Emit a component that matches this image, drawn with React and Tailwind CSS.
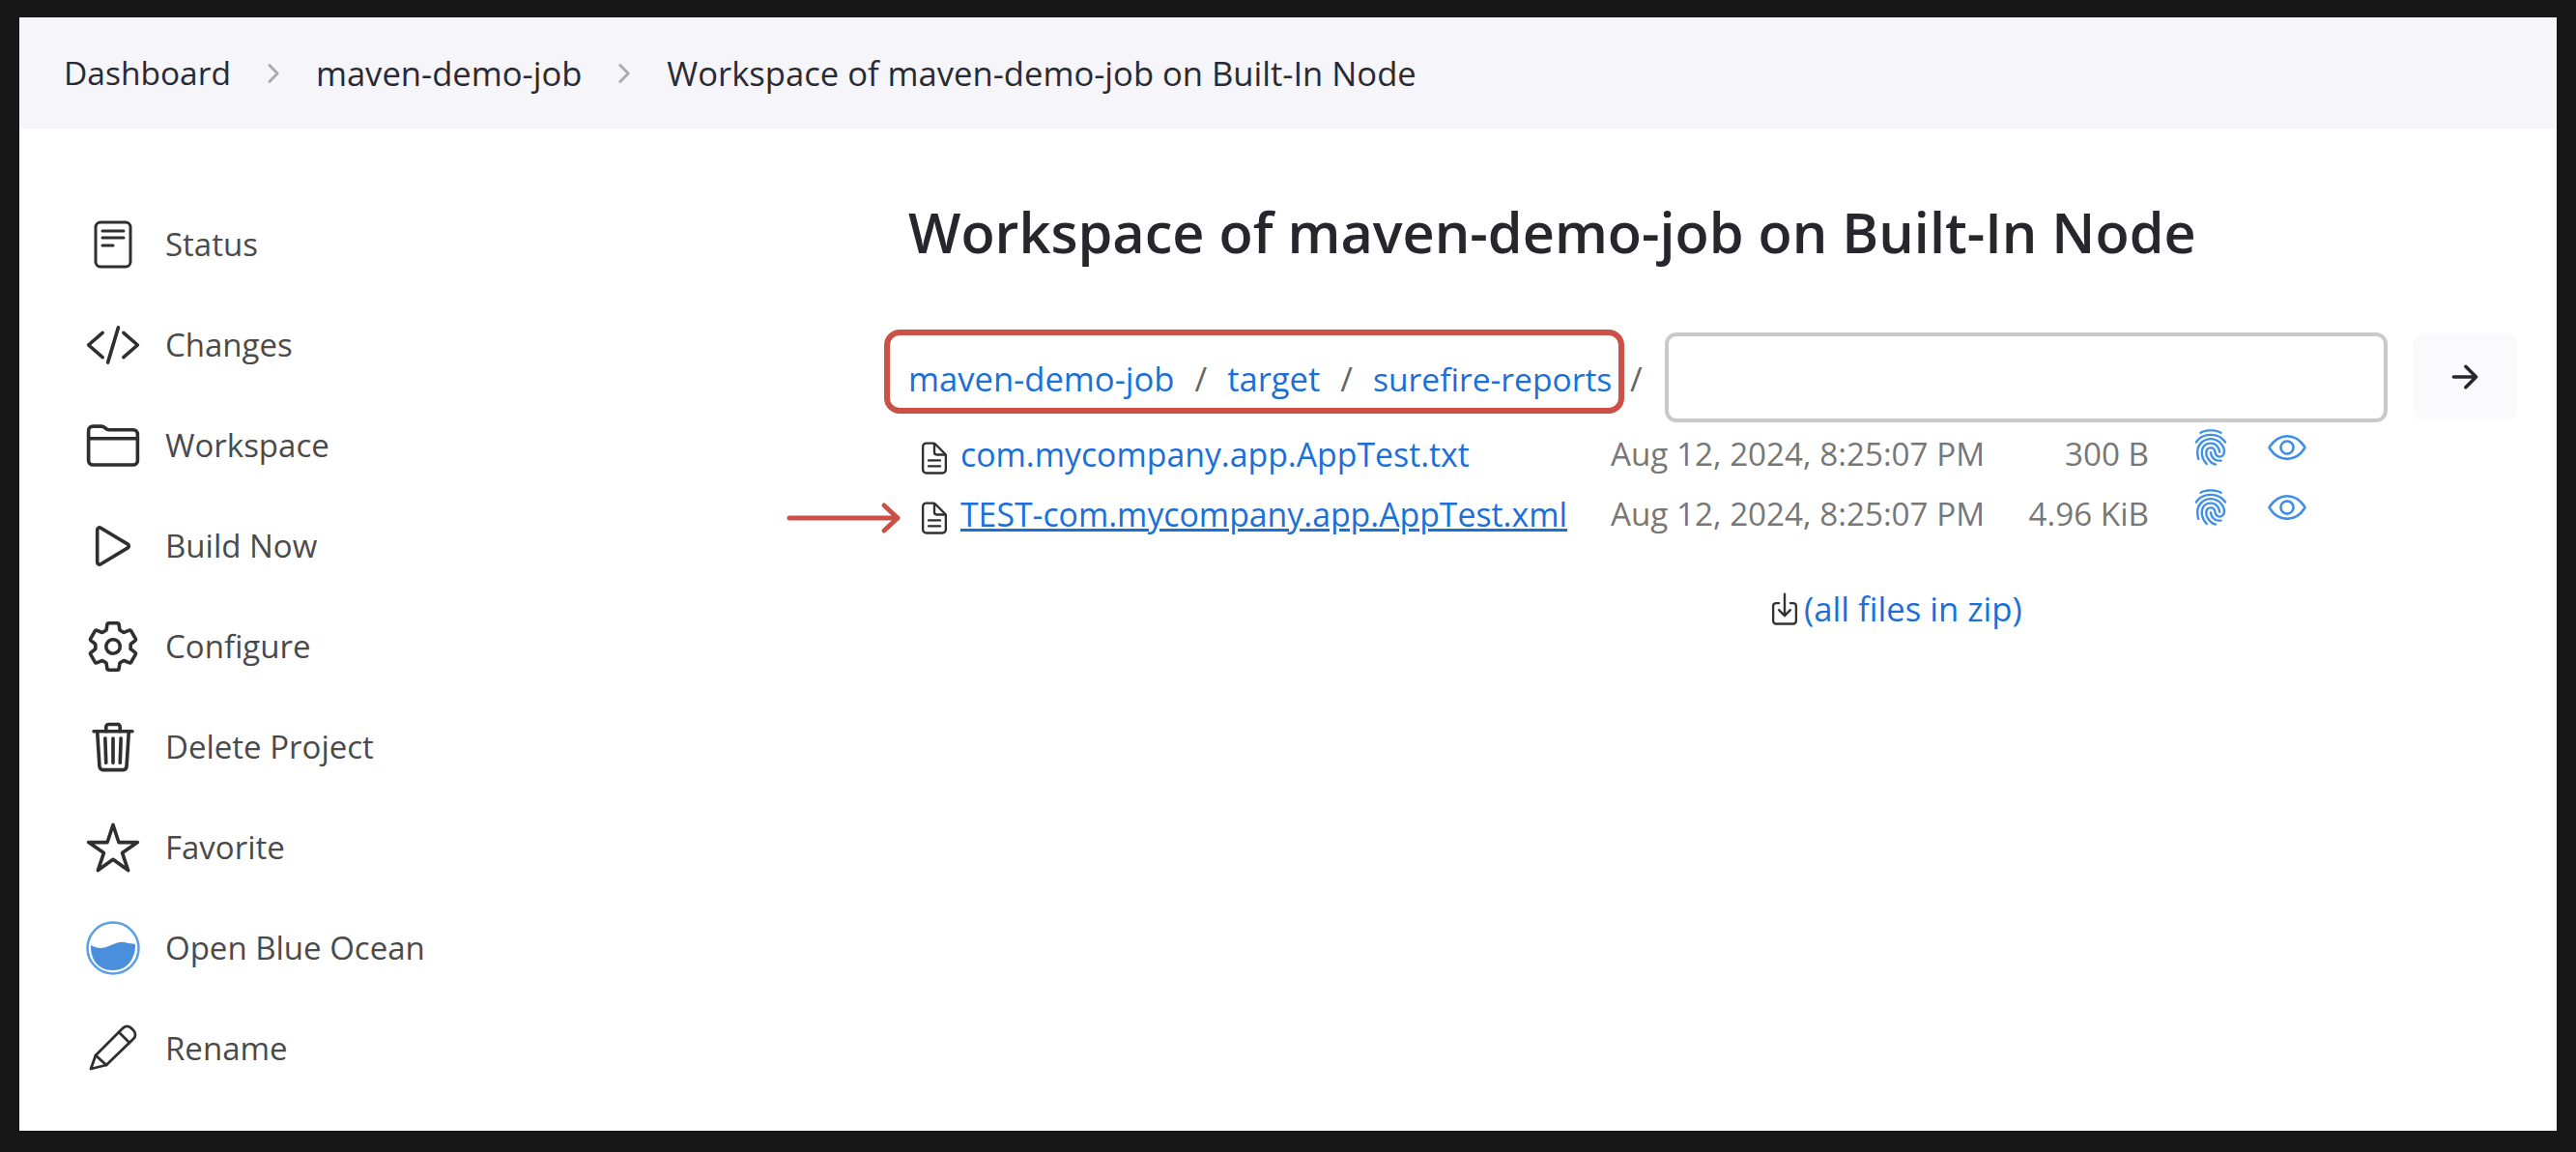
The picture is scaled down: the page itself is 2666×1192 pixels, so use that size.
import React from "react";
import {
  IoChevronForward,
  IoCodeSlashOutline,
  IoFolderOutline,
  IoPlayOutline,
  IoSettingsOutline,
  IoTrashOutline,
  IoStarOutline,
  IoDocumentTextOutline,
  IoFingerPrint,
  IoEyeOutline,
  IoArrowForward,
  IoDownloadOutline,
} from "react-icons/io5";

// Jenkins "status" icon: tall sheet with three lines
const StatusIcon = () => (
  <svg width="58" height="58" viewBox="0 0 58 58" fill="none" stroke="#2f2f2f" strokeWidth="3" strokeLinecap="round">
    <rect x="11" y="6" width="36" height="46" rx="5" />
    <path d="M18 15h22M18 22h22M18 30h11" />
  </svg>
);

const OceanIcon = () => (
  <svg width="58" height="58" viewBox="0 0 58 58">
    <circle cx="29" cy="29" r="26.5" fill="#fff" stroke="#5b9fe4" strokeWidth="2.5" />
    <path d="M6 26c6 3 11 4 17 1.500s12-6 18-4.500c4 1 8 1.500 11 2 .5 12-6 27-23 27S5.500 39 6 26z" fill="#4a8fdc" />
  </svg>
);

const PencilIcon = () => (
  <svg width="58" height="58" viewBox="0 0 58 58" fill="none" stroke="#2f2f2f" strokeWidth="2.8" strokeLinejoin="round" strokeLinecap="round">
    <path d="M6 50l5-14L39 8a6 6 0 0 1 9 0l2 2a6 6 0 0 1 0 9L22 46z" />
    <path d="M35 12l11 11M11 36l11 10" />
  </svg>
);

const navItems = [
  { label: "Status", icon: <StatusIcon /> },
  { label: "Changes", icon: <IoCodeSlashOutline size={58} /> },
  { label: "Workspace", icon: <IoFolderOutline size={58} /> },
  { label: "Build Now", icon: <IoPlayOutline size={58} /> },
  { label: "Configure", icon: <IoSettingsOutline size={58} /> },
  { label: "Delete Project", icon: <IoTrashOutline size={58} /> },
  { label: "Favorite", icon: <IoStarOutline size={58} /> },
  { label: "Open Blue Ocean", icon: <OceanIcon /> },
  { label: "Rename", icon: <PencilIcon /> },
];

const files = [
  { name: "com.mycompany.app.AppTest.txt", size: "300 B" },
  { name: "TEST-com.mycompany.app.AppTest.xml", size: "4.96 KiB", underline: true },
];

const App = () => {
  return (
    <div className="w-[2666px] h-[1192px] overflow-hidden bg-[#171717] pt-[18px] pl-[20px] font-['Open_Sans',sans-serif]">
      <div className="w-[2626px] h-[1152px] bg-white overflow-hidden">
        {/* Breadcrumb bar */}
        <div className="h-[115px] bg-[#f5f5fa] flex items-center pl-[46px] text-[34.6px] text-[#2a2a32]">
          <span className="text-[33.5px]">Dashboard</span>
          <IoChevronForward size={30} className="mx-[29px] text-[#a9a9ae]" />
          <span>maven-demo-job</span>
          <IoChevronForward size={30} className="mx-[29px] text-[#a9a9ae]" />
          <span>Workspace of maven-demo-job on Built-In Node</span>
        </div>

        <div className="flex">
          {/* Side menu */}
          <div className="w-[920px] pt-[68px] pl-[68px]">
            {navItems.map((item) => (
              <div key={item.label} className="h-[104px] flex items-center gap-[25px] text-[33px] text-[#4a4a4a]">
                <span className="w-[58px] h-[58px] flex items-center justify-center text-[#2f2f2f]">{item.icon}</span>
                <span>{item.label}</span>
              </div>
            ))}
          </div>

          {/* Workspace listing */}
          <div className="flex-1">
            <h1 className="mt-[69px] text-[57.6px] leading-[76px] font-semibold text-[#26262c] whitespace-nowrap">
              Workspace of maven-demo-job on Built-In Node
            </h1>

            <div className="mt-[63px] flex items-start -ml-[25px] text-[34.6px]">
              <div className="w-[766px] h-[87px] pt-[15px] border-[6px] border-[#cb5148] rounded-[16px] flex items-center pl-[19px] text-[#1b6fd6] whitespace-nowrap">
                <span>maven-demo-job</span>
                <span className="mx-[21px] text-[#666]">/</span>
                <span>target</span>
                <span className="mx-[21px] text-[#666]">/</span>
                <span className="text-[33.6px]">surefire-reports</span>
              </div>
              <span className="ml-[6px] mt-[25px] text-[#666]">/</span>
              <div className="ml-[23px] mt-[3px] w-[748px] h-[93px] border-[4px] border-[#c9c9c9] rounded-[12px] bg-white" />
              <div className="ml-[26px] mt-[4px] w-[108px] h-[90px] rounded-[12px] bg-[#fafafc] flex items-center justify-center">
                <IoArrowForward size={38} className="text-[#26262c]" />
              </div>
            </div>

            <div className="mt-[2px] flex flex-col text-[33.2px]">
              {files.map((file) => (
                <div key={file.name} className="h-[62px] flex items-center relative whitespace-nowrap">
                  <span className="w-[54px] mt-[8px] flex justify-center">
                    <IoDocumentTextOutline size={38} className="text-[#2f2f2f]" />
                  </span>
                  <span className={`w-[673px] text-[33.8px] text-[#1b6fd6] ${file.underline ? "underline" : ""}`}>{file.name}</span>
                  <span className="w-[389px] text-[#777]">Aug 12, 2024, 8:25:07 PM</span>
                  <span className="w-[168px] text-right text-[#777]">{file.size}</span>
                  <span className="ml-[44px] -mt-[14px] text-[#3f8fe6]">
                    <IoFingerPrint size={40} />
                  </span>
                  <span className="ml-[38px] -mt-[14px] text-[#3f8fe6]">
                    <IoEyeOutline size={42} />
                  </span>
                  {file.underline && (
                    <svg className="absolute -left-[130px] top-[15px]" width="130" height="40" viewBox="0 0 130 40" fill="none" stroke="#cb5148" strokeWidth="5" strokeLinecap="round" strokeLinejoin="round">
                      <path d="M7 20h112M105 7l14 13-14 13" />
                    </svg>
                  )}
                </div>
              ))}
            </div>

            <div className="mt-[41px] ml-[888px] flex items-center gap-[1px] text-[34.7px] text-[#1b6fd6]">
              <IoDownloadOutline size={38} className="text-[#333]" />
              <span>(all files in zip)</span>
            </div>
          </div>
        </div>
      </div>
    </div>
  );
};

export default App;
